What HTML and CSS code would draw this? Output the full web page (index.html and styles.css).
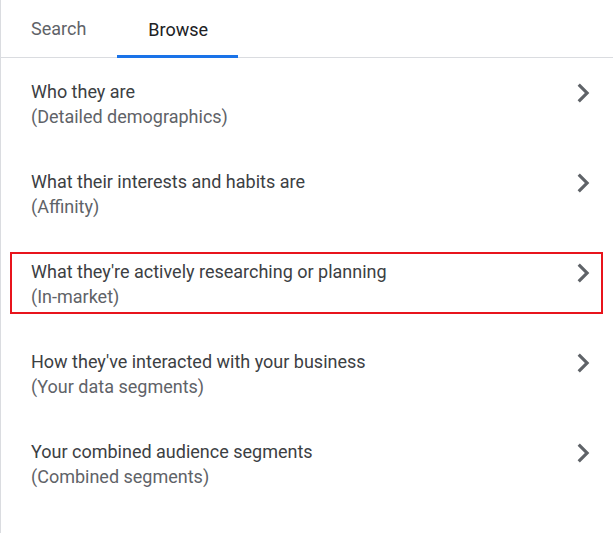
FILE: index.html
```html
<!DOCTYPE html>
<html lang="en">
<head>
    <meta charset="UTF-8">
    <meta name="viewport" content="width=device-width, initial-scale=1.0">
    <title>Audience segments</title>
    <link rel="stylesheet" href="styles.css">
</head>
<body>
    <div class="panel">
        <div class="tabs">
            <div class="tab">Search</div>
            <div class="tab active">Browse</div>
        </div>
        <div class="list">
            <div class="row">
                <div class="row-text">
                    <div class="row-title">Who they are</div>
                    <div class="row-sub">(Detailed demographics)</div>
                </div>
                <svg class="chevron" viewBox="0 0 24 24"><path d="M10 6L8.59 7.41 13.17 12l-4.58 4.59L10 18l6-6z"/></svg>
            </div>
            <div class="row">
                <div class="row-text">
                    <div class="row-title">What their interests and habits are</div>
                    <div class="row-sub">(Affinity)</div>
                </div>
                <svg class="chevron" viewBox="0 0 24 24"><path d="M10 6L8.59 7.41 13.17 12l-4.58 4.59L10 18l6-6z"/></svg>
            </div>
            <div class="row highlighted">
                <div class="row-text">
                    <div class="row-title">What they're actively researching or planning</div>
                    <div class="row-sub">(In-market)</div>
                </div>
                <svg class="chevron" viewBox="0 0 24 24"><path d="M10 6L8.59 7.41 13.17 12l-4.58 4.59L10 18l6-6z"/></svg>
            </div>
            <div class="row">
                <div class="row-text">
                    <div class="row-title">How they've interacted with your business</div>
                    <div class="row-sub">(Your data segments)</div>
                </div>
                <svg class="chevron" viewBox="0 0 24 24"><path d="M10 6L8.59 7.41 13.17 12l-4.58 4.59L10 18l6-6z"/></svg>
            </div>
            <div class="row">
                <div class="row-text">
                    <div class="row-title">Your combined audience segments</div>
                    <div class="row-sub">(Combined segments)</div>
                </div>
                <svg class="chevron" viewBox="0 0 24 24"><path d="M10 6L8.59 7.41 13.17 12l-4.58 4.59L10 18l6-6z"/></svg>
            </div>
        </div>
    </div>
</body>
</html>
```

FILE: styles.css
```css
html, body {
    margin: 0;
    background: #fff;
}
body {
    font-family: Roboto, "Liberation Sans", sans-serif;
    font-size: 18px;
}
.panel {
    min-height: 533px;
    box-sizing: border-box;
    border-left: 1px solid #dadce0;
}
.tabs {
    display: flex;
    height: 57px;
    border-bottom: 1px solid #dadce0;
}
.tab {
    display: flex;
    align-items: center;
    padding: 0 31px 0 30px;
    color: #5f6368;
    box-sizing: border-box;
}
.tab.active {
    color: #202124;
    padding: 3px 30px 0 31px;
    border-bottom: 3px solid #1a73e8;
    margin-bottom: -1px;
}
.row {
    position: relative;
    display: flex;
    align-items: flex-start;
    justify-content: space-between;
    padding: 21px 11px 19px 30px;
    height: 50px;
}
.row-text {
    line-height: 25px;
}
.row-title {
    color: #3c4043;
}
.row-sub {
    color: #5f6368;
}
.chevron {
    width: 38px;
    height: 38px;
    margin-top: -5px;
    fill: #5f6368;
}
.highlighted::after {
    content: "";
    position: absolute;
    top: 14px;
    bottom: 14px;
    left: 9px;
    right: 10px;
    border: 2px solid #e8141c;
}
```
